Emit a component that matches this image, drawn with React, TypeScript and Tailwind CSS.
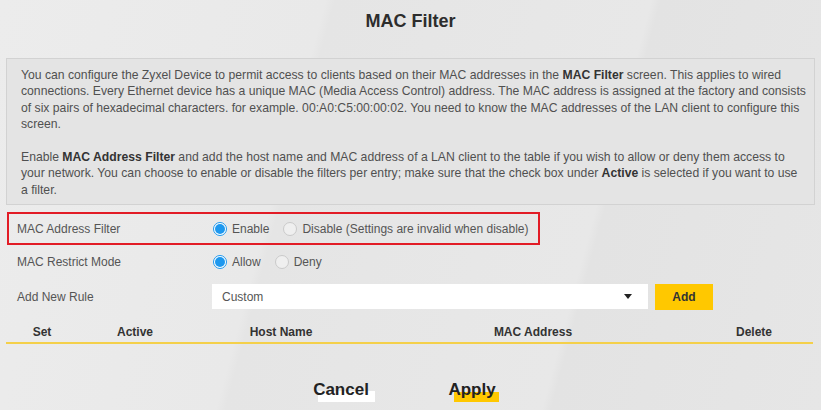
import { ReactNode } from 'react';

function Radio({ checked, label }: { checked?: boolean; label: string }) {
  return (
    <label className="flex items-center shrink-0 whitespace-nowrap mr-[14px]">
      {checked ? (
        <span className="w-[14px] h-[14px] rounded-full border border-[#1e98ee] bg-white flex items-center justify-center">
          <span className="w-[10px] h-[10px] rounded-full bg-[#1e98ee]" />
        </span>
      ) : (
        <span className="w-[14px] h-[14px] rounded-full border border-[#cacaca] bg-[#efefef]" />
      )}
      <span className="ml-[5px]">{label}</span>
    </label>
  );
}

function Row({ label, children }: { label: string; children: ReactNode }) {
  return (
    <div className="flex items-center whitespace-nowrap">
      <span className="w-[196px] shrink-0">{label}</span>
      {children}
    </div>
  );
}

const COLUMNS = [
  { label: 'Set', width: 'w-[72px]' },
  { label: 'Active', width: 'w-[114px]' },
  { label: 'Host Name', width: 'w-[178px]' },
  { label: 'MAC Address', width: 'w-[326px]' },
  { label: 'Delete', width: 'w-[116px]' },
];

export default function App() {
  return (
    <div className="w-[821px] h-[410px] overflow-hidden bg-[#e7e7e7] bg-[linear-gradient(105deg,#ececec_0%,#e9e9e9_35%,#e5e5e5_36%,#e8e8e8_70%,#e3e3e3_71%,#e6e6e6_100%)] font-['Liberation_Sans',Arial,sans-serif] text-[#555]">
      {/* Title */}
      <div className="h-[58px] pt-[9px] text-center">
        <h1 className="text-[18px] leading-[24px] font-bold text-[#2d2d2d]">MAC Filter</h1>
      </div>

      {/* Info box */}
      <div className="mx-[6px] w-[809px] border border-[#d2d2d2] bg-[#e4e4e4] pt-[8px] pb-[6px] pl-[14px] text-[12.2px] leading-[16.4px] text-[#505050] whitespace-nowrap">
        You can configure the Zyxel Device to permit access to clients based on their MAC addresses in the <b className="text-[#333]">MAC Filter</b> screen. This applies to wired
        <br />
        connections. Every Ethernet device has a unique MAC (Media Access Control) address. The MAC address is assigned at the factory and consists
        <br />
        of six pairs of hexadecimal characters. for example. 00:A0:C5:00:00:02. You need to know the MAC addresses of the LAN client to configure this
        <br />
        screen.
        <br />
        <br />
        Enable <b className="text-[#333]">MAC Address Filter</b> and add the host name and MAC address of a LAN client to the table if you wish to allow or deny them access to
        <br />
        your network. You can choose to enable or disable the filters per entry; make sure that the check box under <b className="text-[#333]">Active</b> is selected if you want to use
        <br />
        a filter.
      </div>

      {/* Settings */}
      <div className="text-[12px]">
        <div className="mt-[7px] ml-[7px] w-[533px] h-[33px] border-2 border-[#e21c26] pl-[8px] flex items-center">
          <Row label="MAC Address Filter">
            <Radio checked label="Enable" />
            <Radio label="Disable (Settings are invalid when disable)" />
          </Row>
        </div>
        <div className="h-[34px] pl-[17px] flex items-center">
          <Row label="MAC Restrict Mode">
            <Radio checked label="Allow" />
            <Radio label="Deny" />
          </Row>
        </div>
        <div className="h-[35px] pl-[17px] flex items-center">
          <Row label="Add New Rule">
            <div className="w-[436px] h-[25px] -ml-[1px] bg-white flex items-center justify-between pl-[10px] pr-[16px]">
              <span>Custom</span>
              <svg width="8" height="5" viewBox="0 0 8 5">
                <path d="M0 0h8L4 5z" fill="#222" />
              </svg>
            </div>
            <button className="ml-[7px] w-[58px] h-[26px] bg-[#ffc800] text-[#333] font-bold">Add</button>
          </Row>
        </div>
      </div>

      {/* Table header */}
      <div className="mx-[6px] w-[807px] h-[30px] flex items-end pb-[2px] border-b-2 border-[#f4d04a] text-[12px] leading-[16px] font-bold text-[#333]">
        {COLUMNS.map((col) => (
          <span key={col.label} className={`${col.width} text-center`}>
            {col.label}
          </span>
        ))}
      </div>

      {/* Buttons */}
      <div className="mt-[33px] pl-[301px] flex gap-[51px] text-[17px] font-bold text-[#222]">
        <button className="relative w-[80px] h-[24px]">
          <span className="absolute left-[17px] top-[14px] w-[57px] h-[11px] bg-white" />
          <span className="relative">Cancel</span>
        </button>
        <button className="relative w-[80px] h-[24px]">
          <span className="absolute left-[22px] top-[15px] w-[45px] h-[10px] bg-[#ffc800]" />
          <span className="relative">Apply</span>
        </button>
      </div>
    </div>
  );
}
